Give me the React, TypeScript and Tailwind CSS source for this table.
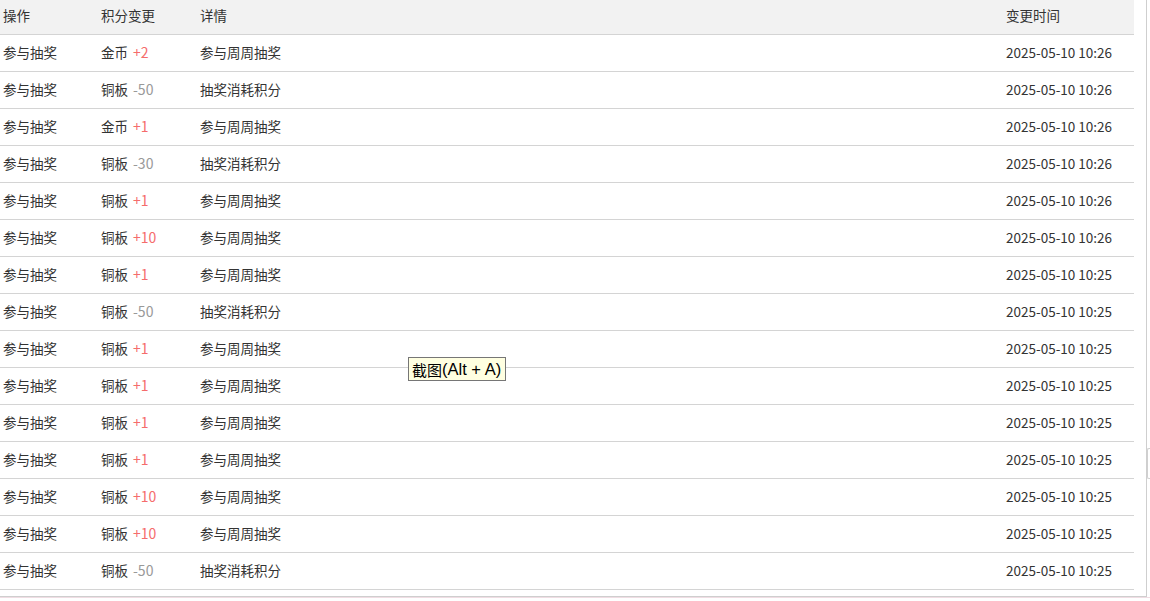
import React from 'react';

type Row = { coin: string; delta: string; detail: string; time: string };

const rows: Row[] = [
  { coin: '金币', delta: '+2', detail: '参与周周抽奖', time: '2025-05-10 10:26' },
  { coin: '铜板', delta: '-50', detail: '抽奖消耗积分', time: '2025-05-10 10:26' },
  { coin: '金币', delta: '+1', detail: '参与周周抽奖', time: '2025-05-10 10:26' },
  { coin: '铜板', delta: '-30', detail: '抽奖消耗积分', time: '2025-05-10 10:26' },
  { coin: '铜板', delta: '+1', detail: '参与周周抽奖', time: '2025-05-10 10:26' },
  { coin: '铜板', delta: '+10', detail: '参与周周抽奖', time: '2025-05-10 10:26' },
  { coin: '铜板', delta: '+1', detail: '参与周周抽奖', time: '2025-05-10 10:25' },
  { coin: '铜板', delta: '-50', detail: '抽奖消耗积分', time: '2025-05-10 10:25' },
  { coin: '铜板', delta: '+1', detail: '参与周周抽奖', time: '2025-05-10 10:25' },
  { coin: '铜板', delta: '+1', detail: '参与周周抽奖', time: '2025-05-10 10:25' },
  { coin: '铜板', delta: '+1', detail: '参与周周抽奖', time: '2025-05-10 10:25' },
  { coin: '铜板', delta: '+1', detail: '参与周周抽奖', time: '2025-05-10 10:25' },
  { coin: '铜板', delta: '+10', detail: '参与周周抽奖', time: '2025-05-10 10:25' },
  { coin: '铜板', delta: '+10', detail: '参与周周抽奖', time: '2025-05-10 10:25' },
  { coin: '铜板', delta: '-50', detail: '抽奖消耗积分', time: '2025-05-10 10:25' },
];

const font = "font-['Microsoft_YaHei','Noto_Sans_CJK_SC',sans-serif]";

const App: React.FC = () => {
  return (
    <div className={`relative h-[601px] w-[1150px] overflow-hidden bg-white text-[13.5px] text-[#333] ${font}`}>
      <div className="h-[597px] w-[1147px] border-r border-b border-[#cfcfcf]">
        <div className="w-[1134px]">
          {/* Kopfzeile */}
          <div className="grid h-[35px] grid-cols-[98px_99px_806px_1fr] items-center border-b border-[#d4d4d4] bg-[#f2f2f2] pb-[4px]">
            <div className="pl-[3px]">操作</div>
            <div className="pl-[3px]">积分变更</div>
            <div className="pl-[3px]">详情</div>
            <div className="pl-[3px]">变更时间</div>
          </div>
          {rows.map((r, i) => (
            <div
              key={i}
              className="grid h-[37px] grid-cols-[98px_99px_806px_1fr] items-center border-b border-[#d4d4d4] pb-[2px]"
            >
              <div className="pl-[3px]">参与抽奖</div>
              <div className="pl-[3px]">
                {r.coin}
                <span className={`ml-[5px] text-[14px] ${r.delta.startsWith('+') ? 'text-[#f56c6c]' : 'text-[#999]'}`}>{r.delta}</span>
              </div>
              <div className="pl-[3px]">{r.detail}</div>
              <div className="pl-[3px]">{r.time}</div>
            </div>
          ))}
        </div>
      </div>
      <div className="h-[1px] w-full bg-[#f0dde3]" />

      {/* Scrollbar-Rest rechts */}
      <div className="absolute left-[1147px] top-[448px] h-[31px] w-[4px] rounded-l-[2px] border border-r-0 border-[#d0d0d0]" />

      {/* Tooltip */}
      <div className="absolute left-[408px] top-[357px] flex h-[24px] w-[98px] items-center border border-[#767676] bg-[#ffffe1] pl-[3px] leading-none text-black">
        <span className="text-[15px]">截图</span>
        <span className="font-['Liberation_Sans',sans-serif] text-[16.5px]">(Alt + A)</span>
      </div>
    </div>
  );
};

export default App;
